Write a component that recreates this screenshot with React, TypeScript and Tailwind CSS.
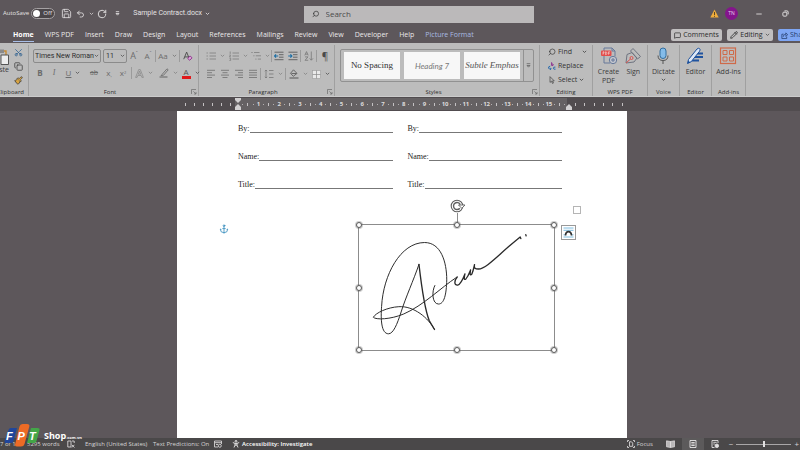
import type { ReactNode } from "react";
import {
  Anchor,
  Copy,
  MessageSquare,
  Minus,
  Paintbrush,
  Pencil,
  RotateCw,
  Save,
  Scissors,
  Search,
  Undo2,
} from "lucide-react";

const tabs = [
  "Home",
  "WPS PDF",
  "Insert",
  "Draw",
  "Design",
  "Layout",
  "References",
  "Mailings",
  "Review",
  "View",
  "Developer",
  "Help",
  "Picture Format",
];

const Chevron = ({ className = "text-[#555]" }: { className?: string }) => (
  <svg viewBox="0 0 6 4" className={`w-[5px] shrink-0 ${className}`}>
    <path d="M1 1l2 2 2-2" fill="none" stroke="currentColor" />
  </svg>
);

const Launcher = () => (
  <svg viewBox="0 0 6 6" className="size-[6px]" fill="none" stroke="#6a6a6a" strokeWidth="0.7">
    <path d="M.5 5V.5H5M2.4 2.4L5 5M5 3v2H3" />
  </svg>
);

const Sep = () => <span className="h-3 w-px shrink-0 bg-[#9b9b9b]" />;

type ToolProps = { label: string; className?: string; children: ReactNode };

const Tool = ({ label, className = "w-[14px]", children }: ToolProps) => (
  <button
    type="button"
    aria-label={label}
    className={`flex h-3 shrink-0 items-center justify-center gap-1 ${className}`}
  >
    {children}
  </button>
);

type GroupProps = { name: string; className: string; launcher?: boolean; children: ReactNode };

const Group = ({ name, className, launcher, children }: GroupProps) => (
  <section
    aria-label={name}
    className={`flex shrink-0 flex-col justify-between border-r border-[#a0a0a0] ${className}`}
  >
    {children}
    <div className="flex h-2 items-center text-[6px] text-[#2e2e2e]">
      <span className="flex-1 whitespace-nowrap text-center">{name}</span>
      {launcher && (
        <button type="button" aria-label={`${name} settings`} className="pr-px">
          <Launcher />
        </button>
      )}
    </div>
  </section>
);

// paragraph glyph: each entry is [x start, x end] of a text line
const Lines = ({ rows }: { rows: number[][] }) => (
  <svg viewBox="0 0 10 10" className="size-[10px]" stroke="#777" strokeWidth="0.9">
    {rows.map(([a, b], i) => (
      <path key={i} d={`M${a} ${1.3 + i * 2.4}H${b}`} />
    ))}
  </svg>
);

const ListIcon = ({ kind }: { kind: "bullet" | "number" | "multi" }) => (
  <svg viewBox="0 0 10 10" className="size-[10px]" stroke="#848484" fill="none" strokeWidth="0.9">
    {kind === "bullet" && <path d="M.5 2h1.4M.5 5h1.4M.5 8h1.4M3.5 2H10M3.5 5H10M3.5 8H10" />}
    {kind === "number" && <path d="M1.2.5v2.4M.4 4h1.2L.5 5.8h1.3M.4 7.2h1.3v2.2H.4M3.5 2H10M3.5 5H10M3.5 8H10" />}
    {kind === "multi" && <path d="M.3 1.5h1.4M2.3 4.8h1.2M4.3 8.1h1.2M3 1.5h5.5M4.8 4.8H10M6.8 8.1H10" />}
  </svg>
);

const IndentIcon = ({ out }: { out?: boolean }) => (
  <svg viewBox="0 0 10 10" className="size-[10px]" fill="none" strokeWidth="0.9">
    <path d="M.5 1.2h9M5 3.7h4.5M5 6.2h4.5M.5 8.7h9" stroke="#5c5c5c" />
    <path d={out ? "M4.2 5H.6M2 3.4L.5 5 2 6.6" : "M.2 5h3.6M2.4 3.4L3.9 5 2.4 6.6"} stroke="#1c6ea4" strokeWidth="1.1" />
  </svg>
);

const TitleBar = () => (
  <header className="flex h-[27px] items-center text-[7px] text-[#e4e2e3]">
    <div className="flex w-[38%] shrink-0 items-center">
      <label className="flex items-center gap-[2px] pl-[3px] text-[6px]">
        <span>AutoSave</span>
        <span className="relative flex h-[11px] w-6 items-center rounded-full border border-[#a5a1a3] bg-[#4b4649]">
          <input type="checkbox" className="absolute inset-0 appearance-none" />
          <span className="ml-px size-[7px] rounded-full bg-white" />
          <span className="ml-[3px]">Off</span>
        </span>
      </label>
      <div className="flex items-center pl-[5px]">
        <Tool label="Save" className="w-3"><Save size={11} strokeWidth={1.8} /></Tool>
        <Tool label="Undo" className="ml-1 w-[18px]">
          <Undo2 size={10} strokeWidth={2.2} />
          <Chevron className="text-[#d0cdce]" />
        </Tool>
        <Tool label="Redo" className="ml-[2px] w-3"><RotateCw size={10} strokeWidth={2.2} /></Tool>
        <Tool label="Customize toolbar" className="ml-[2px] w-[14px]">
          <svg viewBox="0 0 6 6" className="size-[5px]" fill="none" stroke="currentColor">
            <path d="M1 .8h4M1.2 3h3.6L3 5z" />
          </svg>
        </Tool>
      </div>
      <button type="button" className="flex items-center gap-[3px] pl-[9px] font-['Roboto',sans-serif]">
        Sample Contract.docx <Chevron className="text-[#e4e2e3]" />
      </button>
    </div>
    <label className="mt-px flex h-[17px] w-[230px] shrink-0 items-center gap-[6px] bg-[#bbb9ba] pl-2 text-[#333]">
      <Search size={8} strokeWidth={2.2} className="-scale-x-100" />
      <input
        type="search"
        placeholder="Search"
        aria-label="Search"
        className="w-full bg-transparent text-[8px] outline-none placeholder:text-[#4a4a4a]"
      />
    </label>
    <div className="flex flex-1 items-center justify-end pr-2">
      <svg viewBox="0 0 9 9" className="mr-[6px] size-[9px]">
        <path d="M4.5.5L8.7 8.5H.3z" fill="#f0ad3c" />
        <path d="M4.5 3v3M4.5 6.8v1" stroke="#4a3a20" strokeWidth="0.9" />
      </svg>
      <button type="button" className="size-[13px] rounded-full bg-[#84158c] text-[5px] text-[#e6cfe8]">TN</button>
      <Tool label="Minimize" className="ml-[14px] w-[14px]"><Minus size={8} strokeWidth={2.6} /></Tool>
      <Tool label="Restore" className="ml-3 w-[14px]">
        <svg viewBox="0 0 8 8" className="size-[7px]" fill="none" stroke="currentColor" strokeWidth="1.1">
          <rect x="1" y="2.5" width="4.5" height="4.5" rx="1" />
          <path d="M2.8 1H5.6Q7 1 7 2.4V5" />
        </svg>
      </Tool>
    </div>
  </header>
);

const TabRow = () => (
  <div className="flex h-4 items-start justify-between overflow-hidden">
    <nav className="flex shrink-0 gap-[11px] pl-[13px] text-[7px] leading-[15px] text-[#ebe9ea]">
      {tabs.map((tab) => (
        <a
          key={tab}
          href="#"
          className={
            tab === "Home"
              ? "h-[15px] border-b border-[#a9bfe8] font-bold text-white"
              : tab === "Picture Format"
                ? "text-[#a9bbe2]"
                : ""
          }
        >
          {tab}
        </a>
      ))}
    </nav>
    <div className="-mr-3 flex shrink-0 gap-[5px] pt-[2px] text-[7px] text-[#2b2b2b]">
      <button type="button" className="flex h-3 w-[51px] items-center justify-center gap-[2px] rounded-[2px] bg-[#c1bfc0]">
        <MessageSquare size={7} strokeWidth={2.4} /> Comments
      </button>
      <button type="button" className="flex h-3 w-[46px] items-center justify-center gap-[2px] rounded-[2px] bg-[#c1bfc0]">
        <Pencil size={8} strokeWidth={2.4} /> Editing <Chevron />
      </button>
      <button type="button" className="flex h-3 w-[34px] items-center gap-[2px] rounded-[2px] bg-[#7ea6f4] pl-[3px] text-[#26406f]">
        <svg viewBox="0 0 8 8" className="size-[7px]" fill="none" stroke="currentColor" strokeWidth="0.9">
          <path d="M3 2.5H1V7.5H6.5V5.5M2.5 5.5C2.7 3.5 4 2.7 5.5 2.7V1L7.6 3.2 5.5 5V3.8" />
        </svg>
        Share
      </button>
    </div>
  </div>
);

const ClipboardGroup = () => (
  <section aria-label="Clipboard" className="flex w-[29px] shrink-0 flex-col justify-between overflow-hidden border-r border-[#a0a0a0] text-[#3c3c3c]">
    <div className="flex items-start justify-end gap-[5px] pr-[5px] pt-[3px]">
      <button type="button" className="flex flex-col items-end gap-px text-[7px] leading-[8px]">
        <svg viewBox="0 0 16 17" className="h-[17px] w-4" fill="none">
          <path d="M7 15H1V3h3M11 3h2v4" stroke="#c58a35" strokeWidth="1.4" />
          <path d="M4 1.5h7V5H4z" fill="#8a8a8a" />
          <path d="M8 7h7.5v9.5H8z" fill="#ededed" stroke="#555" />
        </svg>
        <span>Paste</span>
      </button>
      <div className="flex flex-col items-center gap-[5px]">
        <Scissors size={9} strokeWidth={2} className="-rotate-90 text-[#2f6291]" aria-label="Cut" />
        <Copy size={9} strokeWidth={2} aria-label="Copy" />
        <Paintbrush size={9} strokeWidth={2} className="fill-[#d9a441]" aria-label="Format painter" />
      </div>
    </div>
    <div className="flex h-2 items-center justify-end gap-[3px] pr-px text-[6px] text-[#2e2e2e]">
      <span>Clipboard</span>
      <Launcher />
    </div>
  </section>
);

const FontGroup = () => (
  <Group name="Font" className="w-[170px]" launcher>
    <div className="flex flex-col gap-1 pl-1 pt-1 text-[#6c6c6c]">
      <div className="flex items-center">
        <label className="flex h-[14px] w-[68px] items-center rounded-[2px] border border-[#8b8b8b] pr-px text-[#2e2e2e]">
          <select aria-label="Font name" className="min-w-0 flex-1 appearance-none bg-transparent pl-px font-['Roboto',sans-serif] text-[7px] outline-none">
            <option>Times New Roman</option>
          </select>
          <Chevron />
        </label>
        <label className="ml-[2px] flex h-[14px] w-6 items-center rounded-[2px] border border-[#8b8b8b] pr-px text-[#2e2e2e]">
          <select aria-label="Font size" className="min-w-0 flex-1 appearance-none bg-transparent pl-[2px] font-['Roboto',sans-serif] text-[7px] outline-none">
            <option>11</option>
          </select>
          <Chevron />
        </label>
        <Tool label="Grow font"><span className="text-[9px]">A</span><span className="-ml-1 self-start text-[5px]">ˆ</span></Tool>
        <Tool label="Shrink font"><span className="text-[8px]">A</span><span className="-ml-1 self-start text-[5px]">ˇ</span></Tool>
        <Sep />
        <Tool label="Change case" className="w-[23px] text-[8px]">Aa<Chevron className="text-[#777]" /></Tool>
        <Sep />
        <Tool label="Clear formatting" className="w-4">
          <svg viewBox="0 0 11 11" className="size-[10px]" fill="none">
            <path d="M.8 9L4 1.2 7.2 9M2 6.5h3.6" stroke="#4a4a4a" />
            <path d="M5.2 8.2l2.6-2.7 2.2 2-2.6 2.7z" fill="#d9a8d8" stroke="#8e2d8c" />
          </svg>
        </Tool>
      </div>
      <div className="flex items-center text-[8px]">
        <Tool label="Bold"><b>B</b></Tool>
        <Tool label="Italic"><i className="font-['Liberation_Serif',serif]">I</i></Tool>
        <Tool label="Underline" className="w-6"><span className="underline">U</span><Chevron /></Tool>
        <Tool label="Strikethrough" className="w-[18px]"><span className="text-[7px] line-through">ab</span></Tool>
        <Tool label="Subscript" className="w-3"><span>x<sub className="text-[5px]">,</sub></span></Tool>
        <Tool label="Superscript" className="w-4"><span>x<sup className="text-[4px]">2</sup></span></Tool>
        <Sep />
        <Tool label="Text effects" className="w-6">
          <svg viewBox="0 0 9 9" className="size-[9px]" fill="none" stroke="#858585" strokeWidth="0.7">
            <path d="M.6 8.4L3.7.6h1.6L8.4 8.4H6.9L6.2 6.5H2.8L2.1 8.4zM3.3 5.2h2.4L4.5 2z" />
          </svg>
          <Chevron className="text-[#858585]" />
        </Tool>
        <Tool label="Highlight" className="w-6">
          <svg viewBox="0 0 10 10" className="size-[10px]" fill="none">
            <path d="M3 6.5L8 .8l1.2 1L4.6 7.2 2 7.6z" stroke="#6f6f6f" strokeWidth="0.9" />
            <path d="M.5 9h8" stroke="#8b8b8b" strokeWidth="1.8" />
          </svg>
          <Chevron className="text-[#858585]" />
        </Tool>
        <Tool label="Font color" className="w-[21px]">
          <span className="w-[9px] border-b-[3px] border-[#e0191b] text-center text-[8px] leading-[8px] text-[#555]">A</span>
          <Chevron />
        </Tool>
      </div>
    </div>
  </Group>
);

const ParagraphGroup = () => (
  <Group name="Paragraph" className="w-[136px]" launcher>
    <div className="flex flex-col gap-[6px] pl-[5px] pt-[5px]">
      <div className="flex items-center">
        <Tool label="Bullets" className="w-[23px]"><ListIcon kind="bullet" /><Chevron className="text-[#858585]" /></Tool>
        <Tool label="Numbering" className="w-[22px]"><ListIcon kind="number" /><Chevron className="text-[#858585]" /></Tool>
        <Tool label="Multilevel list" className="w-[22px]"><ListIcon kind="multi" /><Chevron className="text-[#858585]" /></Tool>
        <Sep />
        <Tool label="Decrease indent"><IndentIcon out /></Tool>
        <Tool label="Increase indent"><IndentIcon /></Tool>
        <Sep />
        <Tool label="Sort" className="w-[15px]">
          <svg viewBox="0 0 10 10" className="size-[10px]" fill="none" stroke="#777" strokeWidth="0.8">
            <path d="M.8 4.4L2.5.6l1.7 3.8M1.3 3.2h2.4M1 5.9h3L1 9.3h3.2M7.3.5v8.6M5.7 7.4l1.6 1.8L9 7.4" />
          </svg>
        </Tool>
        <Sep />
        <Tool label="Show marks" className="w-4"><span className="text-[10px] text-[#4a4a4a]">¶</span></Tool>
      </div>
      <div className="flex items-center">
        <Tool label="Align left"><Lines rows={[[1, 9], [1, 6], [1, 9], [1, 6]]} /></Tool>
        <Tool label="Center"><Lines rows={[[1, 9], [2.5, 7.5], [1, 9], [2.5, 7.5]]} /></Tool>
        <Tool label="Align right"><Lines rows={[[1, 9], [4, 9], [1, 9], [4, 9]]} /></Tool>
        <Tool label="Justify"><Lines rows={[[1, 9], [1, 9], [1, 9], [1, 9]]} /></Tool>
        <Sep />
        <Tool label="Line spacing" className="w-6">
          <svg viewBox="0 0 10 10" className="size-[10px]" fill="none" stroke="#777" strokeWidth="0.8">
            <path d="M2 1v8M.8 2.2L2 1l1.2 1.2M.8 7.8L2 9l1.2-1.2M5 1.5h4.5M5 5h4.5M5 8.5h4.5" />
          </svg>
          <Chevron className="text-[#858585]" />
        </Tool>
        <Sep />
        <Tool label="Shading" className="w-6">
          <svg viewBox="0 0 10 10" className="size-[10px]" fill="none">
            <path d="M4.5.8L8 4.4 4.3 7.3 1.5 4.3zM2.5 4.5h5" stroke="#5f5f5f" strokeWidth="0.9" />
            <path d="M.5 9h9" stroke="#777" strokeWidth="1.5" />
          </svg>
          <Chevron className="text-[#858585]" />
        </Tool>
        <Tool label="Borders" className="w-[22px]">
          <svg viewBox="0 0 9 9" className="size-[9px]">
            <rect x=".5" y=".5" width="8" height="8" fill="#e9e9e9" stroke="#9c9c9c" strokeWidth="0.6" />
            <path d="M4.5.5v8M.5 4.5h8" stroke="#8a8a8a" strokeWidth="0.7" />
          </svg>
          <Chevron />
        </Tool>
      </div>
    </div>
  </Group>
);

const StylesGroup = () => (
  <Group name="Styles" className="w-[205px]" launcher>
    <div className="mx-[5px] mt-1 flex h-[33px] items-stretch gap-1 rounded-[2px] border border-[#919191] pl-[3px] text-[#333]">
      <button type="button" className="my-[2px] w-14 overflow-hidden whitespace-nowrap bg-[#f7f7f7] font-['Liberation_Serif',serif] text-[9px]">No Spacing</button>
      <button type="button" className="my-[2px] w-14 overflow-hidden whitespace-nowrap bg-[#f7f7f7] font-['Lato',sans-serif] text-[8px] italic text-[#777]">Heading 7</button>
      <button type="button" className="my-[2px] w-14 overflow-hidden whitespace-nowrap bg-[#f7f7f7] font-['Liberation_Serif',serif] text-[9px] italic text-[#555]">Subtle Emphas</button>
      <button type="button" aria-label="More styles" className="-ml-px flex flex-1 items-center justify-center border-l border-[#919191]">
        <svg viewBox="0 0 6 6" className="size-[5px]" fill="none" stroke="#555" strokeWidth="0.8">
          <path d="M.8.8h4.4M1.2 3h3.6L3 5z" />
        </svg>
      </button>
    </div>
  </Group>
);

const EditingGroup = () => (
  <Group name="Editing" className="w-[53px]">
    <div className="flex flex-col gap-[2px] pl-2 pt-px text-[7px] text-[#333]">
      <button type="button" className="flex h-3 items-center gap-[2px]">
        <Search size={8} strokeWidth={2} className="-scale-x-100" /> Find <Chevron className="ml-2 text-[#444]" />
      </button>
      <button type="button" className="flex h-3 items-center gap-[2px]">
        <svg viewBox="0 0 10 10" className="size-2" fill="none" strokeWidth="1.2">
          <path d="M4.5.3v4M4.5 2.6h1.7q1 .9 0 1.8H4.5" stroke="#8b2f8e" />
          <path d="M2.8 5.2Q.3 5.5.6 7.6q.4 1.6 3.1 1M2.6 7.2l1.4 1.4L2.6 9.9M9.3 6.4Q6.7 5.9 6.7 7.7T9.4 9" stroke="#2669ae" />
        </svg>
        Replace
      </button>
      <button type="button" className="flex h-3 items-center gap-[2px]">
        <svg viewBox="0 0 8 10" className="h-2 w-2" fill="none" stroke="#444" strokeWidth="0.9">
          <path d="M1.5.8v7.2l1.8-1.5 1.3 2.8 1.2-.5-1.2-2.7h2.2z" />
        </svg>
        Select <Chevron className="text-[#444]" />
      </button>
    </div>
  </Group>
);

const BigTool = ({ label, icon }: { label: ReactNode; icon: ReactNode }) => (
  <button type="button" className="flex flex-col items-center gap-[2px] text-[7px] leading-[9px] text-[#3b3b3b]">
    {icon}
    <span>{label}</span>
  </button>
);

const Ribbon = () => (
  <div className="flex h-[54px] overflow-hidden border-b border-[#cbcbcb] bg-[#bcbcbc] pt-[2px]">
    <ClipboardGroup />
    <FontGroup />
    <ParagraphGroup />
    <StylesGroup />
    <EditingGroup />
    <Group name="WPS PDF" className="w-[55px]">
      <div className="flex items-start justify-center gap-[5px] pt-[2px]">
        <BigTool
          label={<>Create<br />PDF</>}
          icon={
            <svg viewBox="0 0 18 18" className="size-[18px]" fill="none">
              <path d="M4 4V1h8l3 3v5M4 9v7h6M12 1v3h3" stroke="#66799a" />
              <rect x="1" y="3.5" width="10.5" height="5.5" rx="1" fill="#e34d4b" />
              <path d="M3 7.7V4.8h1v1.4H3M5.5 7.7V4.8q1.5 0 1.5 1.4T5.5 7.7M8.5 7.7V4.8h1.7M8.5 6.2h1.4" stroke="#f5dede" strokeWidth="0.6" />
              <circle cx="13" cy="13" r="3.7" fill="#c3c6ce" stroke="#66799a" />
              <path d="M13 11v4M11 13h4" stroke="#66799a" />
            </svg>
          }
        />
        <BigTool
          label="Sign"
          icon={
            <svg viewBox="0 0 18 18" className="size-[18px]" fill="none">
              <path d="M2 16L3 7.5 8 5.5 13 11 10 15zM6.5 4L9 1.5 16.5 9.5 13.5 12z" stroke="#6f7480" />
              <path d="M2 16l4.5-4" stroke="#d9534f" />
              <circle cx="7.5" cy="11" r="1.5" stroke="#d9534f" />
            </svg>
          }
        />
      </div>
    </Group>
    <Group name="Voice" className="w-8">
      <div className="flex flex-col items-center pt-[2px]">
        <BigTool
          label="Dictate"
          icon={
            <svg viewBox="0 0 18 18" className="size-[18px]" fill="none">
              <rect x="6" y="1" width="6" height="10.5" rx="3" fill="#84bce9" stroke="#336e9e" />
              <path d="M4 8.5q0 5 5 5t5-5M9 13.5V17" stroke="#555" />
            </svg>
          }
        />
        <Chevron className="mt-[2px] text-[#444]" />
      </div>
    </Group>
    <Group name="Editor" className="w-8">
      <div className="flex justify-center pt-[2px]">
        <BigTool
          label="Editor"
          icon={
            <svg viewBox="0 0 18 18" className="size-[18px]" fill="none">
              <path d="M9 6.5h8M7 10h10M5 13.5h8" stroke="#1f539f" strokeWidth="2" />
              <path d="M2.5 12.5L11 2q1.5-1.3 2.6-.3t0 2.5L5.2 14.7 1.5 16.5z" fill="#dce7f6" stroke="#1a4f9c" />
              <path d="M1.5 16.5l.8-3 2 2z" fill="#1a4f9c" />
            </svg>
          }
        />
      </div>
    </Group>
    <Group name="Add-ins" className="w-[34px]">
      <div className="flex justify-center pt-[2px]">
        <BigTool
          label="Add-ins"
          icon={
            <svg viewBox="0 0 18 18" className="size-[18px]" fill="none" stroke="#cf6a49">
              <rect x="1.5" y="1" width="15" height="15.5" strokeWidth="1.2" />
              <path d="M4 3.5h4v4H4zM10.5 3.5h4v4h-4zM4 10h4v4H4zM10.5 10h4v4h-4z" />
            </svg>
          }
        />
      </div>
    </Group>
  </div>
);

const Tick = () => <span className="h-[3px] w-px bg-[#c4c1c3]" />;
const Dot = () => <span className="size-px bg-[#b3b0b2]" />;

const IndentMarker = ({ double }: { double?: boolean }) => (
  <svg viewBox="0 0 6 12" className="absolute left-1/2 top-0 h-3 w-[6px] -translate-x-1/2" fill="#d2d0d1">
    {double && <path d="M0 0h6v2L3 5 0 2z" />}
    <path d="M3 6l3 3v3H0V9z" />
  </svg>
);

const Ruler = () => (
  <div className="flex h-[14px] justify-center overflow-hidden bg-[#514c4f] py-px pl-1">
    <div className="flex h-3 w-[450px] text-[6px] font-bold text-[#dddbdc]">
      <div className="flex w-[58px] items-center justify-around pl-1">
        {Array.from({ length: 6 }, (_, i) => <Tick key={i} />)}
      </div>
      <div className="flex flex-1 bg-[#656163]">
        {Array.from({ length: 16 }, (_, i) => (
          <div key={i} className="grid flex-1 grid-cols-4">
            <span className="relative flex items-center justify-center">
              {i === 0 ? <IndentMarker double /> : i}
            </span>
            <span className="flex items-center justify-center"><Dot /></span>
            <span className="flex items-center justify-center"><Tick /></span>
            <span className="flex items-center justify-center"><Dot /></span>
          </div>
        ))}
      </div>
      <div className="relative flex w-[60px] items-center justify-around pl-1">
        <span className="absolute left-[2px] top-0 h-3">
          <IndentMarker />
        </span>
        {Array.from({ length: 6 }, (_, i) => <Tick key={i} />)}
      </div>
    </div>
  </div>
);

const handles = [
  "left-0 top-0",
  "left-1/2 top-0",
  "left-full top-0",
  "left-0 top-1/2",
  "left-full top-1/2",
  "left-0 top-full",
  "left-1/2 top-full",
  "left-full top-full",
];

const Signature = () => (
  <div className="absolute left-[181px] top-[113px] h-[127px] w-[197px] border border-[#8c8c8c]">
    <svg viewBox="26 89 587 378" className="h-full w-full" fill="none" stroke="#2a2a2a" strokeLinecap="round" strokeLinejoin="round">
      <g strokeWidth="3">
        <path d="M206 208C190 255 165 310 152 352C140 390 128 418 114 418C92 418 90 375 93 335C98 240 150 142 223 142C272 142 290 200 290 255C289 300 282 328 265 328C246 328 244 290 254 272" />
        <path d="M253 405C235 370 190 333 145 336C110 338 75 355 68 368C75 376 120 375 160 358C220 332 270 280 320 247" />
      </g>
      <g strokeWidth="4">
        <path d="M206 208C212 260 222 340 237 378L253 405" />
        <path d="M322 246C312 258 312 272 323 271C332 268 340 250 345 237C342 250 342 257 348 252C355 245 358 235 362 225C360 238 360 243 366 237C370 228 372 218 374 209C372 220 376 222 386 222C410 222 450 175 512 125L514 130M529 118L530 122" />
      </g>
    </svg>
    <span className="absolute -top-3 left-1/2 h-3 w-px bg-[#8c8c8c]" />
    <svg viewBox="0 0 16 14" className="absolute -top-[26px] left-1/2 h-[14px] w-4 -translate-x-[7px]" fill="none" stroke="#5e5e5e">
      <circle cx="7" cy="7" r="5.8" fill="#fff" strokeWidth="1.1" />
      <path d="M9.8 9.2A3.5 3.5 0 1 1 10.2 5.6" strokeWidth="1.4" />
      <path d="M8.5 6h6.5l-3.2 3.3z" fill="#fff" strokeWidth="0.9" />
    </svg>
    {handles.map((pos) => (
      <span
        key={pos}
        className={`absolute size-[6px] -translate-x-1/2 -translate-y-1/2 rounded-full border border-[#5a5a5a] bg-white ring-1 ring-[#5a5a5a]/30 ${pos}`}
      />
    ))}
    <button
      type="button"
      aria-label="Layout options"
      className="absolute -right-[22px] top-0 flex size-[15px] items-center justify-center border border-[#999] bg-white"
    >
      <svg viewBox="0 0 11 11" className="size-[11px]" fill="none">
        <path d="M.5 1h10M.5 3.3h10M.5 7.8h1.5M9 7.8h1.5M.5 10h10" stroke="#6db4dc" strokeWidth="0.9" />
        <path d="M2.5 8.5Q2.8 4.7 5.5 4.7t3 3.8" stroke="#333" strokeWidth="1.7" />
      </svg>
    </button>
  </div>
);

const SignatureFields = () => (
  <div className="flex flex-1 flex-col">
    {["By:", "Name:", "Title:"].map((field) => (
      <div key={field} className="flex h-7 items-start leading-[10px]">
        <span>{field}</span>
        <span className="h-[9px] flex-1 border-b border-[#777]" />
      </div>
    ))}
  </div>
);

const Page = () => (
  <main className="flex flex-1 justify-center overflow-hidden pl-1">
    <article className="relative w-[450px] bg-white">
      <div className="flex gap-[15px] pl-[61px] pr-[65px] pt-[13px] font-['Liberation_Serif',serif] text-[8px] text-[#222]">
        <SignatureFields />
        <SignatureFields />
      </div>
      <Anchor size={10} strokeWidth={2} className="absolute left-[42px] top-[113px] text-[#3a8fbe]" />
      <span className="absolute right-[46px] top-[95px] size-2 border border-[#b5b5b5]" />
      <Signature />
    </article>
  </main>
);

const StatusBar = () => (
  <footer className="flex h-3 items-center justify-between whitespace-nowrap bg-[#4a4849] text-[6px] text-[#d6d4d5]">
    <div className="flex items-center">
      <span className="w-[27px] overflow-hidden">7 of 14</span>
      <span className="w-10">5295 words</span>
      <svg viewBox="0 0 8 8" className="mr-[10px] size-2" fill="none" stroke="currentColor" strokeWidth="0.9">
        <path d="M4 7H.8V1H4v6M5 1h2.2v2M4.8 4.8l2.6 2.7M7.4 4.8L4.8 7.5" />
      </svg>
      <span className="w-[68px]">English (United States)</span>
      <span className="w-[61px]">Text Predictions: On</span>
      <svg viewBox="0 0 8 8" className="mr-[10px] size-2" fill="none" stroke="currentColor" strokeWidth="0.9">
        <path d="M.5 1h7v3M.5 1v6H4M.5 2.7h7M2 4.5h2" />
        <circle cx="5.8" cy="5.8" r="1.5" />
      </svg>
      <button type="button" className="flex items-center gap-[2px] font-semibold text-white">
        <svg viewBox="0 0 8 8" className="size-2" fill="none" stroke="currentColor" strokeWidth="0.8">
          <circle cx="4" cy="1.3" r=".9" />
          <path d="M.8 2.5L3 3.4v1.7L2 7.5M7.2 2.5L5 3.4v1.7l1 2.4M3 3.4h2M3 5.1h2" />
        </svg>
        Accessibility: Investigate
      </button>
    </div>
    <div className="flex items-center pr-px">
      <button type="button" className="flex items-center gap-[2px]">
        <svg viewBox="0 0 8 8" className="size-2" fill="none" stroke="currentColor" strokeWidth="0.9">
          <path d="M.5 2V.5H2M6 .5h1.5V2M7.5 6v1.5H6M2 7.5H.5V6M2.5 1.8h2l1.2 1.3v3.2H2.5z" />
        </svg>
        Focus
      </button>
      <button type="button" aria-label="Read mode" className="ml-[7px] flex h-3 w-[22px] items-center justify-center">
        <svg viewBox="0 0 9 8" className="h-2 w-[9px]" fill="#b9b7b8" stroke="#e2e0e1" strokeWidth="0.7">
          <path d="M4.5 1.5L.5.8v6l4 .7zM4.5 1.5L8.5.8v6l-4 .7z" />
        </svg>
      </button>
      <button type="button" aria-label="Print layout" className="flex h-3 w-[22px] items-center justify-center bg-[#5c5a5b]">
        <svg viewBox="0 0 8 8" className="size-2" fill="none" stroke="#e8e6e7" strokeWidth="0.9">
          <path d="M1 .5h6v7H1zM2.3 2.5h3.4M2.3 4h3.4M2.3 5.5h3.4" />
        </svg>
      </button>
      <button type="button" aria-label="Web layout" className="flex h-3 w-[22px] items-center justify-center">
        <svg viewBox="0 0 8 8" className="size-2" fill="none" stroke="#e2e0e1" strokeWidth="0.9">
          <path d="M7 3V.5H1v7h2.5M2.3 2.3h3.4M2.3 4h1.5" />
          <circle cx="5.8" cy="5.8" r="1.8" fill="#e2e0e1" />
        </svg>
      </button>
      <button type="button" aria-label="Zoom out" className="ml-[3px] text-[8px] leading-3">−</button>
      <input
        type="range"
        aria-label="Zoom"
        defaultValue={50}
        className="mx-[3px] h-px w-[55px] appearance-none bg-[#a9a7a8] [&::-webkit-slider-thumb]:h-[6px] [&::-webkit-slider-thumb]:w-[2px] [&::-webkit-slider-thumb]:appearance-none [&::-webkit-slider-thumb]:bg-[#e2e0e1]"
      />
      <button type="button" aria-label="Zoom in" className="text-[8px] leading-3">+</button>
    </div>
  </footer>
);

const Watermark = () => (
  <div className="absolute bottom-[3px] left-1 flex items-end text-white">
    <svg viewBox="0 0 37 23" className="h-[23px] w-[37px] font-['Liberation_Sans',sans-serif] text-[11px] font-bold italic" fill="#fff">
      <path d="M4.5 6Q5 4 7 4H13L9.5 17Q9 19 7 19H2Q0 19 .5 17z" fill="#20469b" />
      <path d="M27 4H33.5Q36 4 35.5 6L32.5 17Q32 19 30 19H23z" fill="#43a648" />
      <path d="M15.5 2.5Q16 0 18.5 0H23Q26 0 25.3 2.5L20.5 20Q19.8 22.5 17 22.5H13Q10.5 22.5 11.2 20z" fill="#ee6b25" />
      <text x="2" y="15.5">F</text>
      <text x="13.5" y="15.5">P</text>
      <text x="25" y="15.5">T</text>
    </svg>
    <span className="pb-[3px] pl-[3px] text-[9px] font-bold leading-[12px]">
      Shop<span className="text-[4px]">.com.vn</span>
    </span>
  </div>
);

const App = () => {
  return (
    <div className="relative flex h-screen flex-col overflow-hidden bg-[#5d575b] font-['Open_Sans',sans-serif]">
      <TitleBar />
      <TabRow />
      <Ribbon />
      <Ruler />
      <Page />
      <StatusBar />
      <Watermark />
    </div>
  );
};

export default App;
